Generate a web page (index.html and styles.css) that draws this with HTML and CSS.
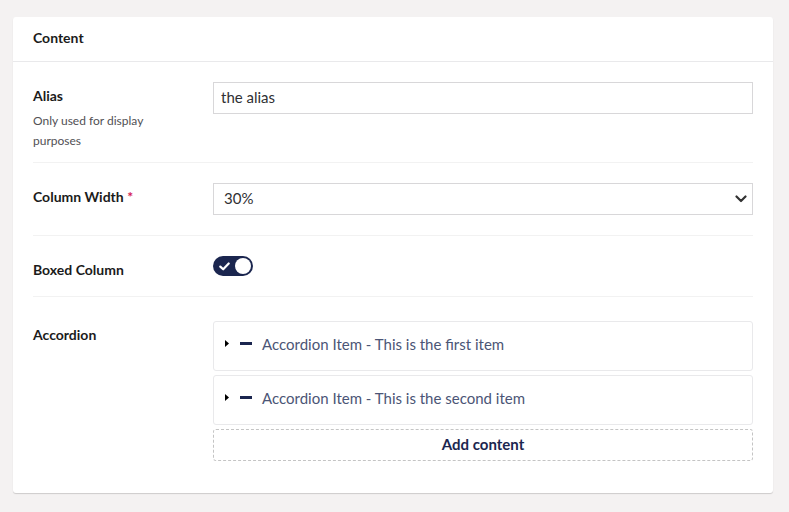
FILE: index.html
```html
<!DOCTYPE html>
<html lang="en">
<head>
<meta charset="utf-8">
<title>Content</title>
<link rel="stylesheet" href="styles.css">
</head>
<body>
<div class="page">
  <section class="card">
    <header class="card-header">Content</header>
    <div class="card-body">
      <div class="prop">
        <div class="prop-label">
          <div class="label">Alias</div>
          <div class="desc">Only used for display purposes</div>
        </div>
        <div class="prop-editor">
          <input class="text-input" type="text" value="the alias">
        </div>
      </div>

      <div class="prop">
        <div class="prop-label">
          <div class="label">Column Width <span class="req">*</span></div>
        </div>
        <div class="prop-editor">
          <div class="select-wrap">
            <select class="select"><option>30%</option></select>
            <svg class="select-arrow" width="12" height="8" viewBox="0 0 12 8"><path d="M1.5 1.5 L6 6 L10.5 1.5" fill="none" stroke="#333" stroke-width="2.2" stroke-linecap="round" stroke-linejoin="round"/></svg>
          </div>
        </div>
      </div>

      <div class="prop">
        <div class="prop-label">
          <div class="label">Boxed Column</div>
        </div>
        <div class="prop-editor">
          <div class="toggle">
            <svg class="toggle-check" width="11" height="9" viewBox="0 0 11 9"><path d="M1.3 4.6 L4.2 7.3 L9.7 1.5" fill="none" stroke="#fff" stroke-width="2.2" stroke-linecap="round" stroke-linejoin="round"/></svg>
            <span class="toggle-knob"></span>
          </div>
        </div>
      </div>

      <div class="prop prop-blocks">
        <div class="prop-label">
          <div class="label">Accordion</div>
        </div>
        <div class="prop-editor blocks">
          <div class="block">
            <svg class="caret" width="4" height="7" viewBox="0 0 4 7"><path d="M0 0 L4 3.5 L0 7 Z" fill="#000"/></svg>
            <span class="dash"></span>
            <span class="block-title">Accordion Item - This is the first item</span>
          </div>
          <div class="block">
            <svg class="caret" width="4" height="7" viewBox="0 0 4 7"><path d="M0 0 L4 3.5 L0 7 Z" fill="#000"/></svg>
            <span class="dash"></span>
            <span class="block-title">Accordion Item - This is the second item</span>
          </div>
          <button class="add-btn" type="button">Add content</button>
        </div>
      </div>
    </div>
  </section>
</div>
</body>
</html>
```

FILE: styles.css
```css
* { box-sizing: border-box; }

html, body {
  margin: 0;
  padding: 0;
  background: #f4f2f2;
  font-family: Lato, "Open Sans", sans-serif;
  color: #1b1b1b;
  font-size: 14px;
}

.page {
  padding: 17px 16px 19px 13px;
}

.card {
  background: #fff;
  border-radius: 3px;
  box-shadow: 0 1px 1px rgba(0, 0, 0, 0.16);
}

.card-header {
  height: 45px;
  padding: 0 20px 3px;
  display: flex;
  align-items: center;
  font-weight: 700;
  font-size: 14px;
  color: #1b1b1b;
  border-bottom: 1px solid #e9e9eb;
}

.card-body {
  padding: 0 20px 12px;
}

.prop {
  display: grid;
  grid-template-columns: 180px 1fr;
  align-items: start;
  padding: 20px 0;
  border-bottom: 1px solid #f2f2f2;
}

.prop-blocks {
  padding-top: 24px;
  border-bottom: none;
}

.prop-label {
  padding-top: 4px;
  padding-right: 24px;
  margin-bottom: -4px;
}

.label {
  font-weight: 700;
  font-size: 14px;
  line-height: 20px;
  color: #1b1b1b;
}

.req {
  color: #d42054;
  font-weight: 700;
}

.desc {
  margin-top: 5px;
  margin-bottom: -5px;
  font-size: 12px;
  line-height: 20px;
  color: #515054;
}

.text-input {
  display: block;
  width: 100%;
  height: 32px;
  margin: 0;
  padding: 0 7px 3px;
  border: 1px solid #d8d7d9;
  border-radius: 0;
  font-family: Lato, "Open Sans", sans-serif;
  font-size: 15px;
  color: #303033;
  background: #fff;
  outline: none;
}

.select-wrap {
  position: relative;
}

.select {
  display: block;
  width: 100%;
  height: 32px;
  margin: 0;
  padding: 0 10px 2px;
  border: 1px solid #d8d7d9;
  border-radius: 0;
  font-family: Lato, "Open Sans", sans-serif;
  font-size: 15px;
  color: #303033;
  background: #fff;
  -webkit-appearance: none;
  appearance: none;
  outline: none;
}

.select-arrow {
  position: absolute;
  right: 6px;
  top: 12px;
  pointer-events: none;
}

.toggle {
  width: 40px;
  height: 20px;
  border-radius: 10px;
  background: #1b264f;
  display: flex;
  align-items: center;
  justify-content: space-between;
  padding: 0 2px 0 6px;
}

.toggle-check {
  display: block;
}

.toggle-knob {
  width: 16px;
  height: 16px;
  border-radius: 50%;
  background: #fff;
}

.blocks {
  display: flex;
  flex-direction: column;
  gap: 4px;
}

.block {
  height: 50px;
  border: 1px solid #e9e9eb;
  border-radius: 3px;
  display: flex;
  align-items: center;
  padding: 0 12px 5px 11px;
}

.caret {
  display: block;
  margin-right: 11px;
}

.dash {
  width: 12px;
  height: 3px;
  background: #1b264f;
  margin-right: 10px;
}

.block-title {
  font-size: 15px;
  color: #4b5576;
  line-height: 20px;
}

.add-btn {
  height: 32px;
  width: 100%;
  margin: 0;
  padding: 0 0 3px;
  border: 1px dashed #c4c4c4;
  border-radius: 3px;
  background: #fff;
  font-family: Lato, "Open Sans", sans-serif;
  font-size: 15px;
  font-weight: 700;
  color: #1b264f;
  cursor: pointer;
}
```
